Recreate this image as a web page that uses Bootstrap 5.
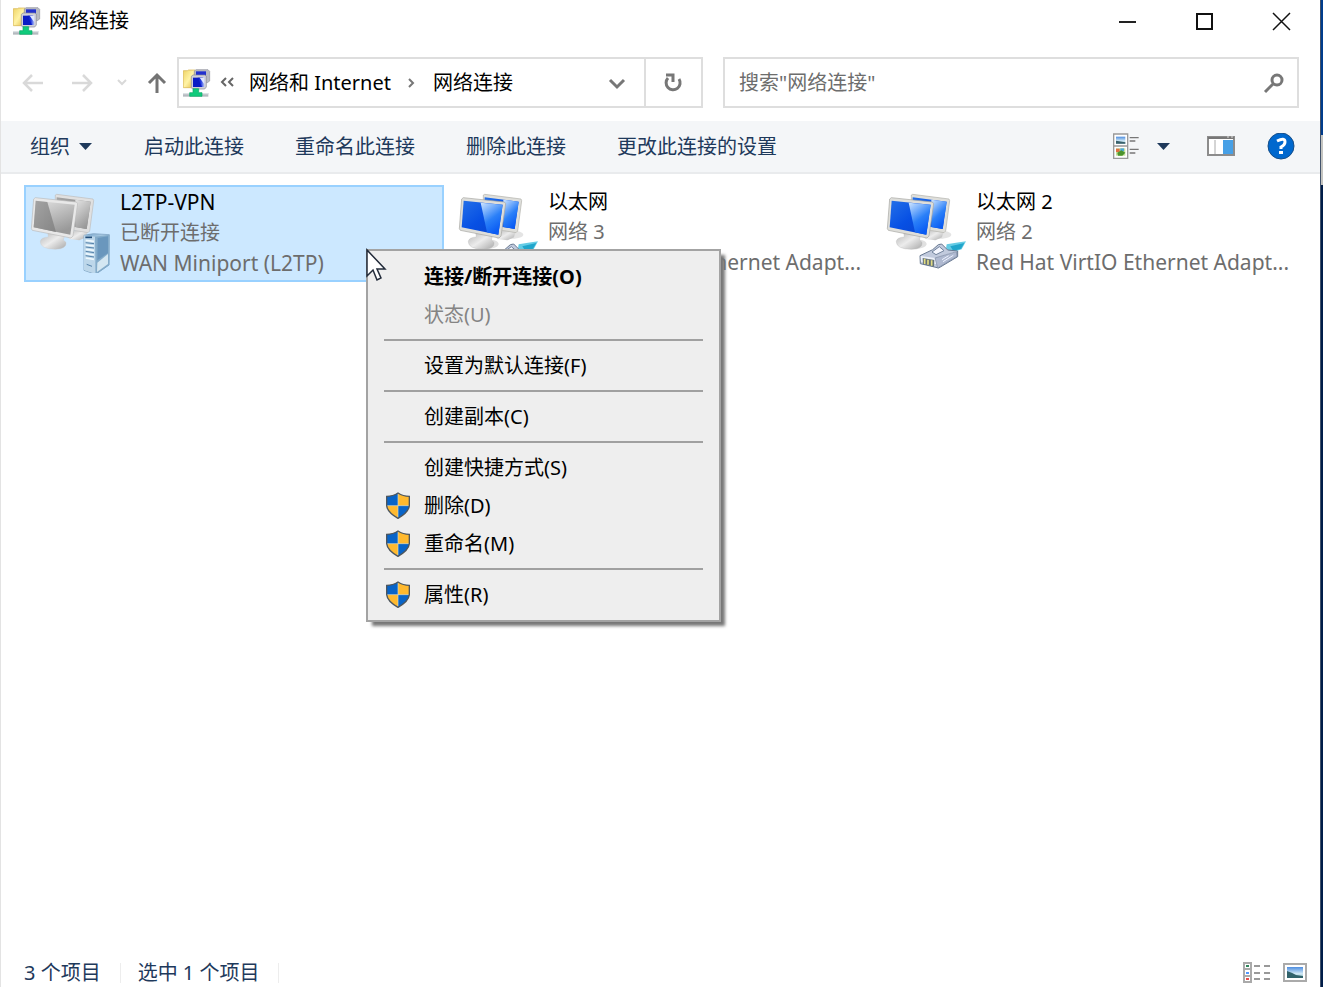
<!DOCTYPE html>
<html lang="zh-CN">
<head>
<meta charset="utf-8">
<meta name="viewport" content="width=device-width, initial-scale=1">
<title>网络连接</title>
<link href="https://cdn.jsdelivr.net/npm/bootstrap@5.3.0/dist/css/bootstrap.min.css" rel="stylesheet">
<style>
  body { font-family: "Noto Sans", "Noto Sans CJK SC", sans-serif; font-size: 20px; line-height: 30px; color: #000; background: #fff; }
  button { border: 0; background: none; padding: 0; color: inherit; }
  svg { display: block; flex: none; }
  .explorer { border-left: 1px solid #e3e3e3; min-width: 0; }
  .desktop-edge { width: 3px; background: linear-gradient(#003c8c 0 135px, #c4c4c0 135px 185px, #001c48 185px); border-left: 1px solid #42526b; }
  .titlebar { height: 42px; padding: 0 12px; }
  .caption-btns { gap: 51px; margin-right: 17px; }
  .addressbar { padding: 15px 21px 13px 20px; }
  .history { gap: 21px; margin-right: 9px; }
  .history .up { margin-left: -4px; }
  .box { height: 51px; border: 2px solid #dedede; }
  .crumbs { width: 526px; }
  .crumbs a { color: #000; text-decoration: none; }
  .refresh { width: 57px; border-left: 2px solid #dedede; }
  .search { margin-left: 20px; padding-left: 14px; }
  .search input { border: 0; outline: 0; min-width: 0; padding: 0; background: none; color: #000; }
  .search input::placeholder { color: #6d6d6d; opacity: 1; }
  .commands { height: 53px; background: #f4f6f8; border-bottom: 2px solid #e9ebed; color: #1e395b; padding: 0 25px 0 29px; }
  .commands .group { gap: 51px; }
  .tiles { display: grid; grid-template-columns: repeat(auto-fill, 420px); gap: 8px; padding: 11px 0 11px 23px; }
  .tile { height: 97px; border: 2px solid transparent; padding: 0 4px; gap: 10px; text-align: left; }
  .tile.selected { background: #cce8ff; border-color: #99d1ff; }
  .tile .info { color: #6d6d6d; white-space: nowrap; }
  .tile .title { color: #000; }
  .tile .latin { font-size: 21px; }
  .ctx { left: 365px; top: 75px; width: 355px; background: #eee; border: 2px solid #a3a3a3; padding: 7px 0 6px; box-shadow: 5px 5px 3px -1px #777; z-index: 2; }
  .ctx button { height: 38px; width: 100%; padding-left: 17px; gap: 13px; }
  .ctx button:disabled { color: #848484; }
  .ctx .slot { width: 26px; height: 28px; flex: none; }
  .ctx hr { margin: 5px 16px 6px; border: 0; border-top: 2px solid #a0a0a0; opacity: 1; }
  .pointer { left: 364px; top: 74px; z-index: 3; pointer-events: none; }
  .status { height: 28px; color: #1e395b; padding: 0 13px 0 23px; }
  .status .cell { border-right: 1px solid #ededed; padding-right: 19px; margin-right: 17px; line-height: 20px; }
</style>
</head>
<body class="d-flex min-vh-100">
<svg width="0" height="0" class="position-absolute" aria-hidden="true">
  <defs>
    <linearGradient id="blue" x1="0" y1="0" x2="1" y2="1"><stop offset="0" stop-color="#2470e8"/><stop offset=".5" stop-color="#0750e4"/><stop offset="1" stop-color="#0b43cc"/></linearGradient>
    <linearGradient id="sheen" x1="0" y1="0" x2=".5" y2="1"><stop offset="0" stop-color="#cfe5ff"/><stop offset=".6" stop-color="#2b80f8"/><stop offset="1" stop-color="#0a5cf4"/></linearGradient>
    <linearGradient id="gray" x1="0" y1="0" x2="1" y2="1"><stop offset="0" stop-color="#a4a4a4"/><stop offset="1" stop-color="#858585"/></linearGradient>
    <linearGradient id="graySheen" x1="0" y1="0" x2=".5" y2="1"><stop offset="0" stop-color="#e4e4e4"/><stop offset="1" stop-color="#999"/></linearGradient>
    <linearGradient id="stand" x1="0" y1="0" x2="1" y2="1"><stop offset="0" stop-color="#b4b4b4"/><stop offset=".5" stop-color="#ececec"/><stop offset="1" stop-color="#a8a8a8"/></linearGradient>
    <linearGradient id="tower" x1="0" y1="0" x2="1" y2="1"><stop offset="0" stop-color="#76a5cc"/><stop offset=".5" stop-color="#b9d5e8"/><stop offset="1" stop-color="#4d80ad"/></linearGradient>
    <linearGradient id="folder" x1="0" y1="0" x2="1" y2="1"><stop offset="0" stop-color="#efd466"/><stop offset=".5" stop-color="#fff3a5"/><stop offset="1" stop-color="#e0b841"/></linearGradient>
    <linearGradient id="screen" x1="0" y1="0" x2="1" y2="0"><stop offset="0" stop-color="#0718b8"/><stop offset=".5" stop-color="#2038e0"/><stop offset="1" stop-color="#b9c6f5"/></linearGradient>
    <linearGradient id="sky" x1="0" y1="0" x2="0" y2="1"><stop offset="0" stop-color="#4d8de0"/><stop offset=".6" stop-color="#cfe8f5"/><stop offset="1" stop-color="#98c4c9"/></linearGradient>
  </defs>
  <symbol id="net" viewBox="40 20 84 84">
    <path d="M41 25h12l4-2h19v53H41z" fill="url(#folder)" stroke="#d5b047" stroke-width="2"/>
    <path d="M74 26l5-4h36l5 5v29l-7 5H74z" fill="#b8bac2" stroke="#8f929d" stroke-width="2"/>
    <path d="M79 27h30v25H79z" fill="#2230cf"/>
    <path d="M65 42l5-4h36l4 3v33l-5 6H69l-4-4z" fill="#d0d0d8" stroke="#868996" stroke-width="2"/>
    <path d="M70 46h30v28H70z" fill="#0a1cc4"/><path d="M84 46h20v28h-7z" fill="url(#screen)"/><path d="M90 46h14v20z" fill="#dfe6ff"/>
    <path d="M40 92h76v11H40z" fill="#b4babf"/><path d="M40 92h76v4H40z" fill="#dce1e4"/>
    <path d="M70 79h17v12h10v11H60V91h10z" fill="#10cb7c" stroke="#0aa967" stroke-width="2"/>
  </symbol>
  <symbol id="pc" viewBox="45 51 240 240">
    <ellipse cx="199" cy="176" rx="42" ry="13" fill="#bbb" opacity=".4"/>
    <path d="M165 170l28-10 24 8-4 16-20 9-32-4z" fill="url(#stand)"/>
    <path d="M121 57l4-2 109 14 2 5-12 91-5 5-98-16z" fill="#dfdfdb" stroke="#b0b0ab" stroke-width="2"/>
    <path d="M125 64l102 13-12 82-92-16z" fill="url(#blue)"/><path d="M181 71l46 6-12 82-34-6z" fill="url(#sheen)"/>
    <ellipse cx="124" cy="204" rx="43" ry="16" fill="#aaa" opacity=".35"/>
    <path d="M98 168l51 10-4 14 8 7q3 20-32 21-46-1-45-24 2-12 24-13z" fill="url(#stand)" stroke="#b4b4b4"/>
    <path d="M56 69l5-4 123 13 4 5-14 97-6 6L52 163l-3-5z" fill="#dededa" stroke="#a5a5a0" stroke-width="2"/>
    <path d="M62 74l117 12-13 90-110-22z" fill="url(#blue)"/><path d="M113 80l66 6-13 90-34-7z" fill="url(#sheen)"/>
  </symbol>
  <symbol id="pcOff" viewBox="45 51 240 240">
    <path d="M165 170l28-10 24 8-4 16-20 9-32-4z" fill="url(#stand)"/>
    <path d="M121 57l4-2 109 14 2 5-12 91-5 5-98-16z" fill="#e0e0e0" stroke="#bcbcbc" stroke-width="2"/>
    <path d="M125 64l102 13-12 82-92-16z" fill="url(#gray)"/><path d="M181 71l46 6-12 82-34-6z" fill="url(#graySheen)"/>
    <path d="M98 168l51 10-4 14 8 7q3 20-32 21-46-1-45-24 2-12 24-13z" fill="url(#stand)" stroke="#c8c8c8"/>
    <path d="M56 69l5-4 123 13 4 5-14 97-6 6L52 163l-3-5z" fill="#e8e8e8" stroke="#bbb" stroke-width="2"/>
    <path d="M62 74l117 12-13 90-110-22z" fill="url(#graySheen)"/><path d="M62 74l35 4 26 90-67-14z" fill="url(#gray)"/>
    <path d="M207 178l28-5 48 3-1 91-40 28-35-12z" fill="url(#tower)" stroke="#7197b8" stroke-width="2"/>
    <path d="M207 178l33 4 2 112-35-12z" fill="#bdd7ea"/><path d="M240 182l43-6v91l-41 28z" fill="#84acca"/>
    <path d="M248 186l31-5v50l-32 22z" fill="#5f8fb8" opacity=".7"/><path d="M247 260l32-26v30l-33 24z" fill="#d4e7f2"/>
    <path d="M212 193l25 3m-25 11l25 3m-25 10l25 3m-25 10l25 4m-25 9l25 4" stroke="#eef8fd" stroke-width="5"/>
    <path d="M212 200l25 3m-25 10l25 3m-25 10l25 4m-25 9l25 4m-22 22l16 6" stroke="#5683aa" stroke-width="3"/>
    <path d="M211 184h20" stroke="#214d79" stroke-width="5"/>
  </symbol>
  <symbol id="plug" viewBox="45 51 240 240">
    <path d="M227 205l28-5 30-4-13 24-27 9-20-11z" fill="#65cce5"/><path d="M238 211l42-10-10 17-23 7z" fill="#20a5cb"/>
    <path d="M147 239l38-18 17-15 10-2 18 18 30 3v17l-57 34-55-13z" fill="#c1cadd" stroke="#687991" stroke-width="3"/>
    <path d="M149 240l43 6 64-20-5 14-51 25-50-8z" fill="#edf1fa"/><path d="M192 246l8 30 58-35-2-14z" fill="#afb9d0" stroke="#7b89a2" stroke-width="2"/>
    <path d="M183 228l22-16 14 12-24 12z" fill="#f5f7ff" stroke="#72839c" stroke-width="3"/>
    <path d="M155 246l35 6-1 20-33-8z" fill="#637078"/><path d="M161 248v16m10-13v15m11-13v16" stroke="#e2dc82" stroke-width="5"/>
    <path d="M213 251l20-12m-17 18l31-19" stroke="#edf2ff" stroke-width="3"/>
  </symbol>
  <symbol id="shield" viewBox="88 180 78 84">
    <path d="M127 183q-15 10-34 10v28q2 20 34 38 32-18 34-38v-28q-19 0-34-10z" fill="#ffb92e"/>
    <path d="M127 183q-15 10-34 10v28h34z" fill="#0864c8"/><path d="M127 221h34q-2 20-34 38z" fill="#0864c8"/>
    <path d="M127 184v73M94 221h66" stroke="#d9ddc8" stroke-width="2"/>
    <path d="M127 183q-15 10-34 10v28q2 20 34 38 32-18 34-38v-28q-19 0-34-10z" fill="none" stroke="#4d565e" stroke-width="4"/>
  </symbol>
</svg>

<div class="explorer d-flex flex-column flex-grow-1">
  <header class="titlebar d-flex align-items-center justify-content-between">
    <div class="d-flex align-items-center gap-2"><svg width="28" height="28"><use href="#net"/></svg><span>网络连接</span></div>
    <div class="caption-btns d-flex">
      <button aria-label="最小化"><svg width="28" height="20"><path d="M6 10h17v2H6z" fill="#222"/></svg></button>
      <button aria-label="最大化"><svg width="28" height="20"><path d="M5 3h15v15H5z" fill="none" stroke="#111" stroke-width="2"/></svg></button>
      <button aria-label="关闭"><svg width="20" height="20"><path d="M2 2l17 17M19 2L2 19" stroke="#111" stroke-width="1.500"/></svg></button>
    </div>
  </header>

  <nav class="addressbar d-flex align-items-center" aria-label="地址">
    <div class="history d-flex align-items-center">
      <button aria-label="后退" disabled><svg width="24" height="24" fill="none" stroke="#d9d9d9" stroke-width="2.500"><path d="M22 12H3m8-8l-8 8 8 8"/></svg></button>
      <button class="ms-1" aria-label="前进" disabled><svg width="24" height="24" fill="none" stroke="#d9d9d9" stroke-width="2.500"><path d="M2 12h19m-8-8l8 8-8 8"/></svg></button>
      <button aria-label="最近的位置" disabled><svg width="14" height="24" fill="none" stroke="#d9d9d9" stroke-width="2"><path d="M3 9l4 4 4-4"/></svg></button>
      <button class="up" aria-label="上移"><svg width="22" height="24" fill="none" stroke="#747474" stroke-width="3"><path d="M11 22V4M3 12l8-8 8 8"/></svg></button>
    </div>
    <div class="box crumbs d-flex align-items-center flex-shrink-0">
      <svg class="ms-1" width="28" height="28"><use href="#net"/></svg>
      <svg class="ms-2" width="18" height="20" fill="none" stroke="#666" stroke-width="2"><path d="M7 5l-4 4 4 4M14 5l-4 4 4 4"/></svg>
      <a class="ms-2 ps-1" href="#">网络和 Internet</a>
      <svg class="mx-3" width="10" height="20" fill="none" stroke="#777" stroke-width="2"><path d="M2 6l4 4-4 4"/></svg>
      <a href="#">网络连接</a>
      <button class="ms-auto me-3" aria-label="以前的位置"><svg width="22" height="20" fill="none" stroke="#777" stroke-width="3"><path d="M4 7l7 7 7-7"/></svg></button>
      <button class="refresh h-100 d-flex align-items-center justify-content-center" aria-label="刷新"><svg width="22" height="24" fill="none" stroke="#777" stroke-width="3"><path d="M5 7a7 7 0 1 0 11 1"/><path d="M3 4h7v7"/></svg></button>
    </div>
    <form class="box search d-flex align-items-center flex-grow-1">
      <input id="q" class="flex-grow-1" type="text" aria-label="搜索" placeholder='搜索"网络连接"'>
      <button class="me-2 pe-1" type="button" aria-label="搜索"><svg width="22" height="22" fill="none" stroke="#777" stroke-width="3"><circle cx="14" cy="8" r="5"/><path d="M10 12l-8 8"/></svg></button>
    </form>
  </nav>

  <div class="commands d-flex align-items-center justify-content-between">
    <div class="group d-flex">
      <button class="d-flex align-items-center gap-2">组织 <svg width="15" height="10"><path d="M1 1h13L7.500 8z" fill="#1e395b"/></svg></button>
      <button>启动此连接</button><button>重命名此连接</button><button>删除此连接</button><button>更改此连接的设置</button>
    </div>
    <div class="d-flex align-items-center">
      <button aria-label="更改视图"><svg width="28" height="28" viewBox="100 394 84 84"><path d="M105 397h42v73h-42zM105 433h42" fill="#fff" stroke="#999" stroke-width="4"/><path d="M112 405h28v21h-28z" fill="url(#sky)"/><path d="M112 417l28 5v4h-28z" fill="#39606b"/><path d="M112 440h28v22h-28z" fill="#c5df9a"/><path d="M112 441h11v10h-11z" fill="#dd7140"/><path d="M125 440h11v9h-11z" fill="#4aa7d8"/><path d="M116 453l12-7 12 7-9 9h-13z" fill="#4c942d"/><path d="M153 408h27M153 418h17M153 443h27M153 454h17" stroke="#777" stroke-width="4"/></svg></button>
      <button class="ms-3" aria-label="更多选项"><svg width="15" height="10"><path d="M1 1h13L7.500 8z" fill="#1e395b"/></svg></button>
      <button class="ms-4 ps-2 me-4" aria-label="预览窗格"><svg class="ms-1 me-1" width="28" height="22"><path d="M1 1h26v18H1z" fill="#fff" stroke="#8c8c8c" stroke-width="2"/><path d="M1 1h26v2H1z" fill="#777"/><path d="M16 4h10v14H16z" fill="#47a0e6"/><path d="M8 4v14" stroke="#aaa"/><path d="M20 1h2m2 0h2" stroke="#ddd"/></svg></button>
      <button class="ms-1" aria-label="帮助"><svg width="28" height="28"><circle cx="14" cy="13" r="13" fill="#0068ce" stroke="#164e88"/><path d="M10 8q8-4 8 1 0 3-4 5v2" fill="none" stroke="#fff" stroke-width="3"/><path d="M12 18h4v3h-4z" fill="#fff"/></svg></button>
    </div>
  </div>

  <main class="position-relative flex-grow-1">
    <div class="tiles">
      <button class="tile selected d-flex"><svg class="mt-1" width="80" height="84"><use href="#pcOff" width="80" height="80" y="2"/></svg><span class="info"><span class="title latin">L2TP-VPN</span><br>已断开连接<br><span class="latin">WAN Miniport (L2TP)</span></span></button>
      <button class="tile d-flex"><svg class="mt-1" width="80" height="84"><use href="#pc" width="80" height="80" y="2"/><use href="#plug" width="80" height="80" y="2"/></svg><span class="info"><span class="title">以太网</span><br>网络 3<br><span class="latin">Red Hat VirtIO Ethernet Adapt...</span></span></button>
      <button class="tile d-flex"><svg class="mt-1" width="80" height="84"><use href="#pc" width="80" height="80" y="2"/><use href="#plug" width="80" height="80" y="2"/></svg><span class="info"><span class="title">以太网 2</span><br>网络 2<br><span class="latin">Red Hat VirtIO Ethernet Adapt...</span></span></button>
    </div>
    <div class="ctx position-absolute" role="menu">
      <button class="d-flex align-items-center fw-bold" role="menuitem"><span class="slot"></span>连接/断开连接(O)</button>
      <button class="d-flex align-items-center" role="menuitem" disabled><span class="slot"></span>状态(U)</button>
      <hr>
      <button class="d-flex align-items-center" role="menuitem"><span class="slot"></span>设置为默认连接(F)</button>
      <hr>
      <button class="d-flex align-items-center" role="menuitem"><span class="slot"></span>创建副本(C)</button>
      <hr>
      <button class="d-flex align-items-center" role="menuitem"><span class="slot"></span>创建快捷方式(S)</button>
      <button class="d-flex align-items-center" role="menuitem"><svg class="slot"><use href="#shield"/></svg>删除(D)</button>
      <button class="d-flex align-items-center" role="menuitem"><svg class="slot"><use href="#shield"/></svg>重命名(M)</button>
      <hr>
      <button class="d-flex align-items-center" role="menuitem"><svg class="slot"><use href="#shield"/></svg>属性(R)</button>
    </div>
    <svg class="pointer position-absolute" width="24" height="34" viewBox="0 0 24 34" aria-hidden="true"><path d="M2 2v26l6-6 4 10 4-2-4-9h8z" fill="#fff" stroke="#222b3a" stroke-width="1.500"/></svg>
  </main>

  <footer class="status d-flex align-items-center">
    <span class="cell">3 个项目</span><span class="cell">选中 1 个项目</span>
    <button class="ms-auto" aria-label="详细信息"><svg width="28" height="22"><path d="M1 1h7v19H1zM1 7h7M1 14h7" fill="#fff" stroke="#aaa" stroke-width="2"/><path d="M3 4h3" stroke="#31865c" stroke-width="2"/><path d="M3 11h3" stroke="#4f97ff" stroke-width="2"/><path d="M3 17h3" stroke="#e54c4c" stroke-width="2"/><path d="M11 4h6m4 0h6M11 11h6m4 0h6M11 17h6m4 0h6" stroke="#999" stroke-width="2"/></svg></button>
    <button class="ms-2 ps-1" aria-label="大图标"><svg width="24" height="20"><path d="M1 1h22v17H1z" fill="#fff" stroke="#aaa" stroke-width="2"/><path d="M4 4h16v11H4z" fill="url(#sky)"/><path d="M4 8q6 2 9 4l7 1v2H4z" fill="#31636b"/></svg></button>
  </footer>
</div>
<div class="desktop-edge flex-shrink-0"></div>
<script src="https://cdn.jsdelivr.net/npm/bootstrap@5.3.0/dist/js/bootstrap.bundle.min.js"></script>
</body>
</html>
